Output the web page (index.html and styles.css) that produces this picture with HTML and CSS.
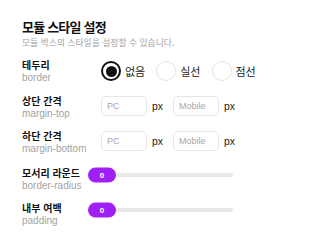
FILE: index.html
```html
<!DOCTYPE html>
<html lang="ko">
<head>
<meta charset="utf-8">
<link rel="stylesheet" href="styles.css">
</head>
<body>
<div class="panel">
  <h1 class="title">모듈 스타일 설정</h1>
  <p class="desc">모듈 박스의 스타일을 설정할 수 있습니다.</p>

  <div class="row first">
    <div class="label"><div class="name">테두리</div><div class="key">border</div></div>
    <div class="radios">
      <label class="radio"><span class="circle checked"></span><span>없음</span></label>
      <label class="radio"><span class="circle"></span><span>실선</span></label>
      <label class="radio"><span class="circle"></span><span>점선</span></label>
    </div>
  </div>

  <div class="row">
    <div class="label"><div class="name">상단 간격</div><div class="key">margin-top</div></div>
    <div class="inputs">
      <span class="field">PC</span><span class="unit">px</span>
      <span class="field">Mobile</span><span class="unit">px</span>
    </div>
  </div>

  <div class="row tight">
    <div class="label"><div class="name">하단 간격</div><div class="key">margin-bottom</div></div>
    <div class="inputs">
      <span class="field">PC</span><span class="unit">px</span>
      <span class="field">Mobile</span><span class="unit">px</span>
    </div>
  </div>

  <div class="row loose">
    <div class="label short"><div class="name">모서리 라운드</div><div class="key">border-radius</div></div>
    <div class="slider"><span class="thumb">0</span></div>
  </div>

  <div class="row tight">
    <div class="label short"><div class="name">내부 여백</div><div class="key">padding</div></div>
    <div class="slider"><span class="thumb">0</span></div>
  </div>
</div>
</body>
</html>
```
FILE: styles.css
```css
* { box-sizing: border-box; }
body {
  margin: 0;
  background: #fff;
  font-family: "Noto Sans CJK KR", sans-serif;
  color: #111;
}
.panel { padding: 19px 22px 0 22px; }
.title {
  margin: 0;
  font-size: 13px;
  font-weight: 700;
  line-height: 16px;
  letter-spacing: -0.8px;
  color: #111;
}
.desc {
  margin: 2px 0 0 0;
  font-size: 8.8px;
  line-height: 12px;
  color: #a3a3a3;
}
.row {
  display: flex;
  align-items: center;
  margin-top: 10px;
}
.row.first { margin-top: 9px; }
.row.tight { margin-top: 9px; }
.row.loose { margin-top: 11px; }
.label { width: 79px; flex: none; }
.label.short { width: 66px; }
.name {
  font-size: 10px;
  font-weight: 700;
  line-height: 14px;
  color: #111;
}
.key {
  font-family: "Liberation Sans", Arial, sans-serif;
  font-size: 10px;
  line-height: 12px;
  color: #a3a3a3;
}
.radios { display: flex; align-items: center; gap: 11px; }
.radio { display: flex; align-items: center; gap: 4px; font-size: 11px; color: #222; }
.circle {
  width: 20px; height: 20px; border-radius: 50%;
  border: 1px solid #e2e2e2;
  display: flex; align-items: center; justify-content: center;
}
.circle.checked { border: 2px solid #111; }
.circle.checked::after {
  content: ""; width: 11px; height: 11px; border-radius: 50%; background: #111;
}
.inputs { display: flex; align-items: center; margin-bottom: 2px; }
.field {
  width: 46px; height: 20px;
  border: 1px solid #e6e6e6; border-radius: 5px;
  font-family: "Liberation Sans", Arial, sans-serif;
  font-size: 9px; color: #a8a8a8;
  padding-left: 5px; line-height: 18px;
}
.unit { font-family: "Liberation Sans", Arial, sans-serif; font-size: 10.5px; color: #222; padding-left: 5px; width: 26px; }
.slider {
  position: relative;
  width: 145px; height: 4px; border-radius: 2px;
  background: #e8e8e8;
  margin-bottom: 8px;
}
.thumb {
  position: absolute; left: 0; top: 50%;
  transform: translateY(-50%);
  width: 28px; height: 15px; border-radius: 8px;
  background: #a01ff5; color: #fff;
  font-family: "Liberation Sans", Arial, sans-serif;
  font-size: 8px; font-weight: 700; line-height: 15px;
  text-align: center;
}
```
